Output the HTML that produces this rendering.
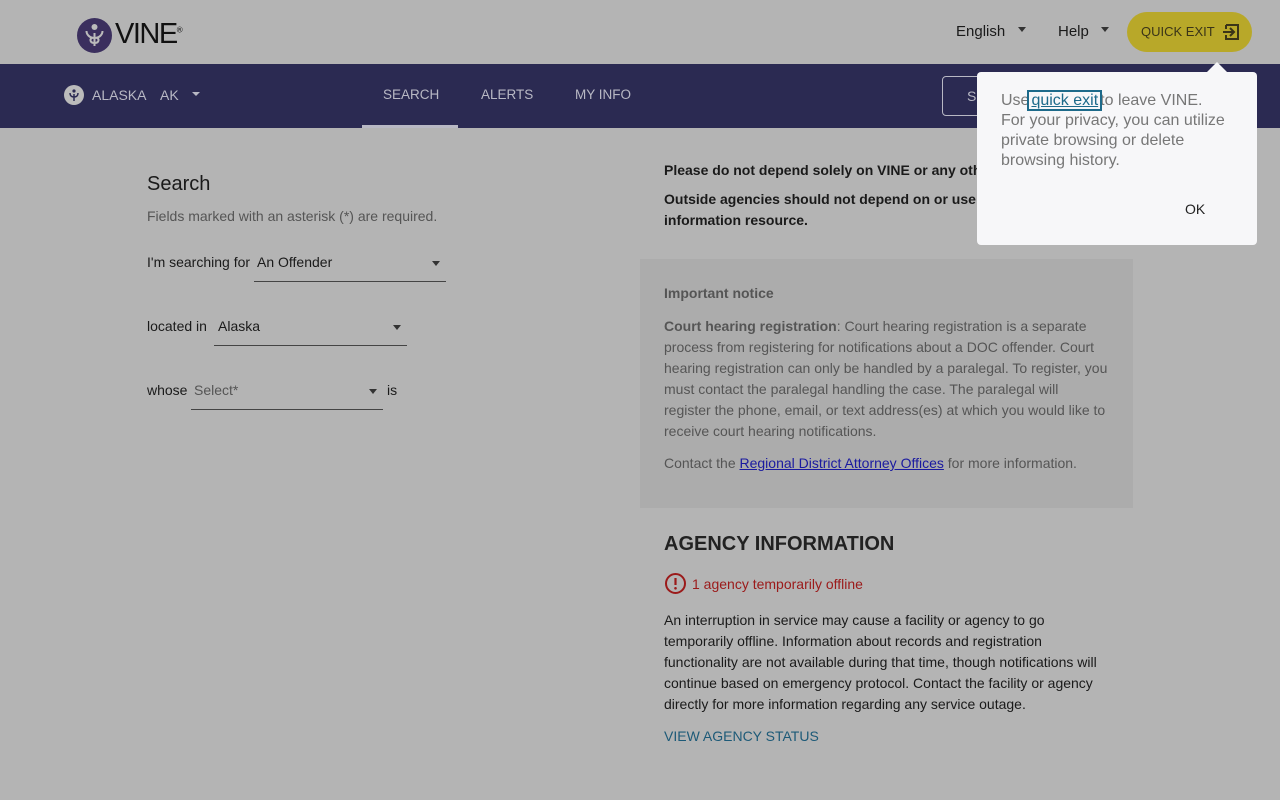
<!DOCTYPE html>
<html><head><style>
*{box-sizing:border-box;margin:0;padding:0}
body{width:1280px;height:800px;background:#b4b4b4;font-family:"Liberation Sans",sans-serif;position:relative;overflow:hidden;color:#1a1a1a}
.a{position:absolute;white-space:nowrap}
.nav{position:absolute;top:64px;left:0;width:1280px;height:64px;background:#2b2a52}
.navt{color:#b8b8c4;font-size:14px}
.caret{display:inline-block;border-left:4px solid transparent;border-right:4px solid transparent;border-top:5px solid #333;vertical-align:middle}
.sel{position:absolute;border-bottom:1px solid #444;height:32px;font-size:14px}
p{font-size:14px;line-height:21px}
</style></head><body>
<svg class="a" style="left:77px;top:18px" width="35" height="35"><circle cx="17.5" cy="17.5" r="17.5" fill="#3b2f5e"/><circle cx="17.5" cy="9" r="3" fill="#bbb"/><path d="M17.5 28 V15 M17.5 20 C12 20 9.5 16 9.5 13 M17.5 20 C23 20 25.5 16 25.5 13 M17.5 25 c-4 0 -5 -3 -3 -5 M17.5 25 c4 0 5 -3 3 -5" stroke="#bbb" stroke-width="2" fill="none"/></svg>
<div class="a" style="left:115px;top:18px;font-size:29px;color:#111;letter-spacing:-1.5px;font-weight:300">VINE<sup style="font-size:8px;letter-spacing:0">®</sup></div>
<div class="a" style="left:956px;top:23px;font-size:15px">English &nbsp;&nbsp;<span class="caret" style="vertical-align:4px"></span></div>
<div class="a" style="left:1058px;top:23px;font-size:15px">Help &nbsp;&nbsp;<span class="caret" style="vertical-align:4px"></span></div>
<div class="a" style="left:1127px;top:12px;width:125px;height:40px;border-radius:20px;background:#b8a829;font-size:13px;color:#3a3418;padding:12px 0 0 14px">QUICK EXIT</div>
<svg class="a" style="left:1222px;top:23px" width="18" height="18"><path d="M4 2H16V16H4V12M4 6V2" stroke="#3a3418" stroke-width="2" fill="none"/><path d="M1 9H12M8 5l4 4-4 4" stroke="#3a3418" stroke-width="2" fill="none"/></svg>
<div class="nav"></div>
<svg class="a" style="left:64px;top:85px" width="20" height="20"><circle cx="10" cy="10" r="10" fill="#bbb"/><path d="M10 16V9M10 12C7 12 6 10 6 8M10 12C13 12 14 10 14 8" stroke="#2b2a52" stroke-width="1.5" fill="none"/><circle cx="10" cy="6" r="1.6" fill="#2b2a52"/></svg>
<div class="a navt" style="left:92px;top:87px">ALASKA</div>
<div class="a navt" style="left:160px;top:87px">AK</div>
<div class="a" style="left:192px;top:92px;border-left:4px solid transparent;border-right:4px solid transparent;border-top:4px solid #b8b8c4"></div>
<div class="a navt" style="left:383px;top:87px;font-size:13.5px">SEARCH</div>
<div class="a" style="left:362px;top:125px;width:96px;height:3px;background:#b8b8c4"></div>
<div class="a navt" style="left:481px;top:87px;font-size:13.5px">ALERTS</div>
<div class="a navt" style="left:575px;top:87px;font-size:13.5px">MY INFO</div>
<div class="a" style="left:942px;top:76px;width:60px;height:40px;border:1px solid #b8b8c4;border-radius:4px;color:#b8b8c4;font-size:14px;padding:11px 0 0 24px">S</div>
<div class="a" style="left:147px;top:173px;font-size:20px">Search</div>
<div class="a" style="left:147px;top:208px;font-size:14px;color:#555">Fields marked with an asterisk (*) are required.</div>
<div class="a" style="left:147px;top:254px;font-size:14px">I'm searching for</div>
<div class="sel" style="left:254px;top:250px;width:192px;padding:4px 0 0 3px">An Offender<span class="caret" style="position:absolute;right:6px;top:11px"></span></div>
<div class="a" style="left:147px;top:318px;font-size:14px">located in</div>
<div class="sel" style="left:214px;top:314px;width:193px;padding:4px 0 0 4px">Alaska<span class="caret" style="position:absolute;right:6px;top:11px"></span></div>
<div class="a" style="left:147px;top:382px;font-size:14px">whose</div>
<div class="sel" style="left:191px;top:378px;width:192px;padding:4px 0 0 3px;color:#555">Select*<span class="caret" style="position:absolute;right:6px;top:11px"></span></div>
<div class="a" style="left:387px;top:382px;font-size:14px">is</div>
<div class="a" style="left:664px;top:160px;font-size:14px;font-weight:bold;line-height:21px">Please do not depend solely on VINE or any other p</div>
<div class="a" style="left:664px;top:189px;font-size:14px;font-weight:bold;line-height:21px">Outside agencies should not depend on or use VIN<br>information resource.</div>
<div class="a" style="left:640px;top:259px;width:493px;height:249px;background:#acacac"></div>
<div class="a" style="left:664px;top:283px;color:#555">
<p style="font-weight:bold;margin-bottom:12px">Important notice</p>
<p><b>Court hearing registration</b>: Court hearing registration is a separate<br>process from registering for notifications about a DOC offender. Court<br>hearing registration can only be handled by a paralegal. To register, you<br>must contact the paralegal handling the case. The paralegal will<br>register the phone, email, or text address(es) at which you would like to<br>receive court hearing notifications.</p>
<p style="margin-top:11px">Contact the <span style="color:#1a1aa0;text-decoration:underline">Regional District Attorney Offices</span> for more information.</p></div>
<div class="a" style="left:664px;top:533px;font-size:20px;font-weight:bold;color:#222">AGENCY INFORMATION</div>
<svg class="a" style="left:664px;top:572px" width="23" height="23"><circle cx="11.5" cy="11.5" r="9.5" stroke="#9b1a1a" stroke-width="2" fill="none"/><path d="M11.5 6v7" stroke="#9b1a1a" stroke-width="2.2"/><circle cx="11.5" cy="16.3" r="1.3" fill="#9b1a1a"/></svg>
<div class="a" style="left:692px;top:576px;font-size:14px;color:#9b1a1a">1 agency temporarily offline</div>
<div class="a" style="left:664px;top:610px;width:445px;white-space:normal"><p>An interruption in service may cause a facility or agency to go temporarily offline. Information about records and registration functionality are not available during that time, though notifications will continue based on emergency protocol. Contact the facility or agency directly for more information regarding any service outage.</p></div>
<div class="a" style="left:664px;top:728px;font-size:14px;color:#1d5a78">VIEW AGENCY STATUS</div>
<div class="a" style="left:977px;top:72px;width:280px;height:173px;background:#f7f7f9;border-radius:4px"></div>
<div class="a" style="left:1207px;top:62px;border-left:10px solid transparent;border-right:10px solid transparent;border-bottom:10px solid #f7f7f9"></div>
<div class="a" style="left:1001px;top:91px;font-size:16px;line-height:20px;color:#777">Use<span style="color:#1d6a8a;text-decoration:underline;outline:2px solid #1d6a8a;padding:0 2px">quick exit</span>to leave VINE.<br>For your privacy, you can utilize<br>private browsing or delete<br>browsing history.</div>
<div class="a" style="left:1185px;top:201px;font-size:14px;color:#222">OK</div>
</body></html>
